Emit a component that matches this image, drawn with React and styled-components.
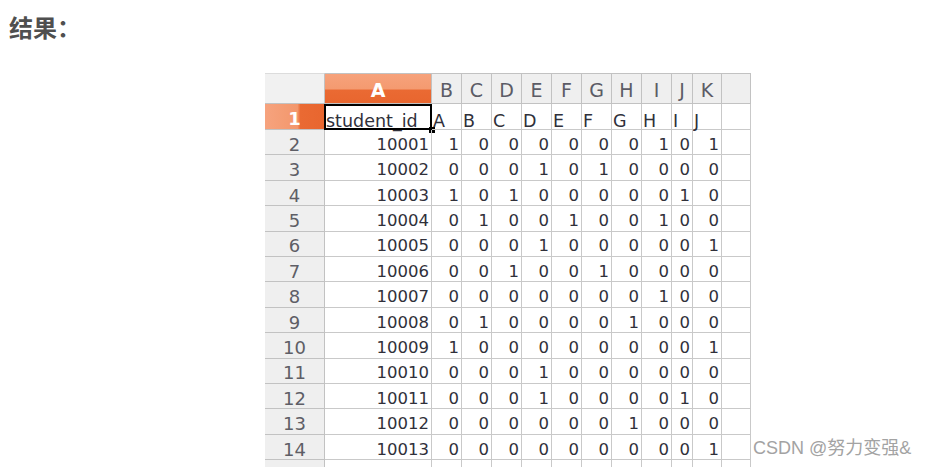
import React from "react";
import styled, { createGlobalStyle, css } from "styled-components";

const GlobalStyle = createGlobalStyle`
  html, body {
    margin: 0;
    padding: 0;
    height: 467px;
    overflow: hidden;
    background: #ffffff;
  }
`;

const COLUMNS = [
  { label: "A", width: 107 },
  { label: "B", width: 30 },
  { label: "C", width: 30 },
  { label: "D", width: 30 },
  { label: "E", width: 30 },
  { label: "F", width: 30 },
  { label: "G", width: 30 },
  { label: "H", width: 30 },
  { label: "I", width: 30 },
  { label: "J", width: 21 },
  { label: "K", width: 29 },
  { label: "", width: 29 },
];

const ROWS = [
  ["10001", "1 0 0 0 0 0 0 1 0 1"],
  ["10002", "0 0 0 1 0 1 0 0 0 0"],
  ["10003", "1 0 1 0 0 0 0 0 1 0"],
  ["10004", "0 1 0 0 1 0 0 1 0 0"],
  ["10005", "0 0 0 1 0 0 0 0 0 1"],
  ["10006", "0 0 1 0 0 1 0 0 0 0"],
  ["10007", "0 0 0 0 0 0 0 1 0 0"],
  ["10008", "0 1 0 0 0 0 1 0 0 0"],
  ["10009", "1 0 0 0 0 0 0 0 0 1"],
  ["10010", "0 0 0 1 0 0 0 0 0 0"],
  ["10011", "0 0 0 1 0 0 0 0 1 0"],
  ["10012", "0 0 0 0 0 0 1 0 0 0"],
  ["10013", "0 0 0 0 0 0 0 0 0 1"],
];

const HEADER_ROW = ["student_id", "A", "B", "C", "D", "E", "F", "G", "H", "I", "J", ""];

const App = () => {
  return (
    <Page>
      <GlobalStyle />
      <Title>结果：</Title>
      <Sheet>
        <Corner />
        {COLUMNS.map((col) => (
          <ColHead key={col.label || "x"} $active={col.label === "A"}>
            {col.label}
          </ColHead>
        ))}

        <RowHead $active>1</RowHead>
        {HEADER_ROW.map((text, i) => (
          <Cell key={i} $selected={i === 0} $label>
            {text}
          </Cell>
        ))}

        {ROWS.map(([id, bits], r) => {
          const values = bits.split(" ");
          return (
            <React.Fragment key={id}>
              <RowHead>{r + 2}</RowHead>
              <Cell $right>{id}</Cell>
              {values.map((v, c) => (
                <Cell key={c} $right>
                  {v}
                </Cell>
              ))}
              <Cell />
            </React.Fragment>
          );
        })}

        <RowHead />
        {COLUMNS.map((col) => (
          <Cell key={"last" + col.label} />
        ))}
      </Sheet>
      <Watermark>CSDN @努力变强&amp;</Watermark>
    </Page>
  );
};

const Page = styled.div`
  position: relative;
  height: 467px;
  padding-top: 15px;
  box-sizing: border-box;
  display: flex;
  flex-direction: column;
  align-items: flex-start;
`;

const Title = styled.h3`
  margin: 0 0 0 9px;
  font-family: "Noto Sans CJK SC", "Noto Sans", sans-serif;
  font-size: 24px;
  line-height: 24px;
  font-weight: 700;
  color: #4f4f4f;
`;

const Sheet = styled.div`
  margin: 34px 0 0 265px;
  display: grid;
  grid-template-columns: 60px ${COLUMNS.map((c) => c.width + "px").join(" ")};
  grid-template-rows: 31px 26px repeat(14, 25.42px);
  font-family: "DejaVu Sans", sans-serif;
  font-size: 16.5px;
  color: #333;
  background: #ffffff;
`;

const base = css`
  box-sizing: border-box;
  border-right: 1px solid #c9c9c9;
  border-bottom: 1px solid #c9c9c9;
  display: flex;
  align-items: center;
  white-space: nowrap;
  overflow: visible;
`;

const Corner = styled.div`
  ${base};
  background: #f1f1f1;
  border-color: #c2c2c2;
  border-top: 1px solid #dcdcdc;
`;

const ColHead = styled.div`
  ${base};
  justify-content: center;
  padding-top: 3px;
  border-top: 1px solid #dcdcdc;
  border-color: #c2c2c2;
  font-size: 19px;
  color: #5c5c66;
  background: ${(p) =>
    p.$active
      ? "linear-gradient(to bottom, #f6a27b 0%, #f49a70 52%, #ea6a33 55%, #e8662f 100%)"
      : "#efefef"};
  ${(p) =>
    p.$active &&
    css`
      color: #ffffff;
      font-weight: 700;
    `}
`;

const RowHead = styled.div`
  ${base};
  justify-content: center;
  padding-top: 4px;
  border-color: #c2c2c2;
  font-size: 18px;
  color: #5e5e66;
  background: #efefef;
  ${(p) =>
    p.$active &&
    css`
      color: #ffffff;
      font-weight: 700;
      background: linear-gradient(to right, #f6a37e 0%, #f3976c 55%, #ea6a33 60%, #e8662f 100%);
    `}
`;

const Cell = styled.div`
  ${base};
  position: relative;
  padding: 4px 2px 0 2px;
  justify-content: ${(p) => (p.$right ? "flex-end" : "flex-start")};
  color: #30303a;
  ${(p) =>
    p.$label &&
    css`
      padding: 8px 1px 0 1px;
      font-size: 17.5px;
    `}
  ${(p) =>
    p.$selected &&
    css`
      &::before {
        content: "";
        position: absolute;
        inset: 0 -1px -1px -1px;
        border: 2px solid #000;
        pointer-events: none;
      }
      &::after {
        content: "";
        position: absolute;
        right: -4px;
        bottom: -4px;
        width: 6px;
        height: 6px;
        background: #000;
      }
    `}
`;

const Watermark = styled.div`
  position: absolute;
  left: 753px;
  top: 437px;
  font-family: "Liberation Sans", "Noto Sans CJK SC", sans-serif;
  font-size: 18px;
  line-height: 22px;
  color: #a3a3a3;
`;

export default App;
